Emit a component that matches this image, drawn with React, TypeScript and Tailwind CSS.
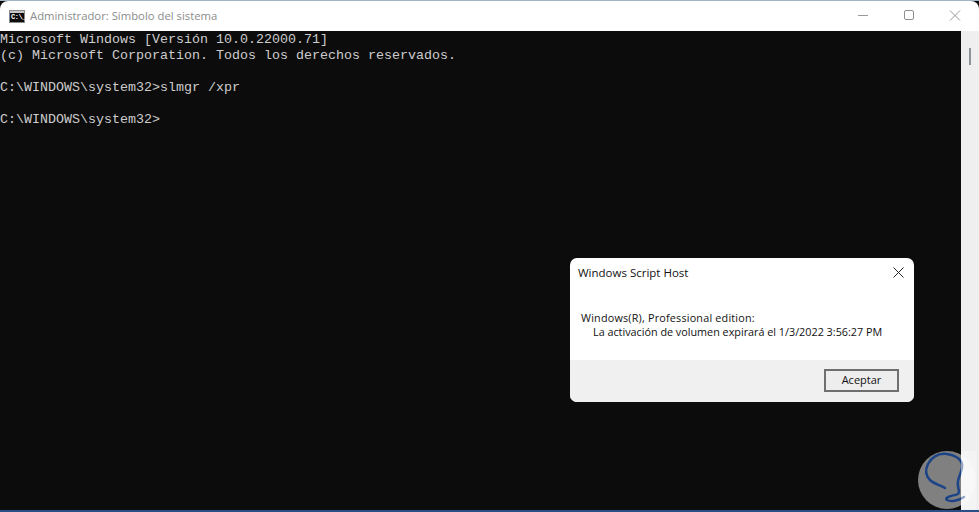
const consoleLines = [
  "Microsoft Windows [Versión 10.0.22000.71]",
  "(c) Microsoft Corporation. Todos los derechos reservados.",
  "",
  "C:\\WINDOWS\\system32>slmgr /xpr",
  "",
  "C:\\WINDOWS\\system32>",
];

const bulbPath =
  "M27 37C22 34 16 33 12 29C8 25 7 19 10 13C14 6 21 2 29 3C37 4 43 8 44 13C45 19 41 24 40 30C39 35 41 38 41 41C41 44 36 44 33 45C29 46 27 48 29 49C33 51 40 50 46 46";

function CmdIcon() {
  return (
    <div className="flex h-[13px] w-[16px] flex-col border border-[#8a8a8a] bg-[#0c0c0c]">
      <div className="h-[2px] bg-[#c8c8c8]" />
      <div className="flex-1 pl-[1px] font-['Liberation_Mono',monospace] text-[7px] leading-[8px] font-bold tracking-[-0.5px] text-white">
        C:\_
      </div>
    </div>
  );
}

function TitleBar() {
  return (
    <div className="flex h-[30px] items-center rounded-t-[8px] bg-white pl-[9px]">
      <CmdIcon />
      <span className="ml-[5px] text-[11.3px] text-[#8c8c8c]">Administrador: Símbolo del sistema</span>
      <div className="ml-auto flex items-center">
        <svg width="46" height="30" viewBox="0 0 46 30">
          <path d="M18 14.5h10" stroke="#999" strokeWidth="1" />
        </svg>
        <svg width="46" height="30" viewBox="0 0 46 30">
          <rect x="18.5" y="9.5" width="9" height="9" rx="1.5" fill="none" stroke="#8f8f8f" strokeWidth="1" />
        </svg>
        <svg width="46" height="30" viewBox="0 0 46 30" className="mr-[1px]">
          <path d="M18 9.5l10 10M28 9.5l-10 10" stroke="#999" strokeWidth="1" />
        </svg>
      </div>
    </div>
  );
}

function Scrollbar() {
  return (
    <div className="flex w-[18px] shrink-0 justify-center bg-[#efefef] pt-[17px]">
      <div className="h-[17px] w-[2px] bg-[#8f9295]" />
    </div>
  );
}

function ScriptDialog() {
  return (
    <div className="absolute top-[257px] left-[570px] flex h-[144px] w-[344px] flex-col overflow-hidden rounded-[7px] bg-white font-['Open_Sans','Noto_Sans',sans-serif] text-[#111]">
      <div className="flex h-[29px] items-center justify-between pr-[10px] pl-[8px] text-[11.5px]">
        <span>Windows Script Host</span>
        <svg width="11" height="11" viewBox="0 0 11 11">
          <path d="M.5.5l10 10M10.5.5l-10 10" stroke="#222" strokeWidth="1" />
        </svg>
      </div>
      <div className="h-[73px] pt-[24px] pl-[11px] text-[10.8px] leading-[14px]">
        <div className="tracking-[0.2px]">Windows(R), Professional edition:</div>
        <div className="pl-[12px]">La activación de volumen expirará el 1/3/2022 3:56:27 PM</div>
      </div>
      <div className="flex flex-1 items-center justify-end bg-[#f0f0f0] pr-[15px]">
        <button className="mt-[-2px] h-[23px] w-[75px] border-2 border-[#6f6f6f] bg-[#ededed] text-[11px] text-[#111]">
          Aceptar
        </button>
      </div>
    </div>
  );
}

function Watermark() {
  return (
    <div className="absolute top-[450px] left-[918px] h-[58px] w-[58px]">
      <div className="absolute inset-0 rounded-full bg-[linear-gradient(90deg,#808080_0%,#808080_74%,#f8f8f8_74%,#f8f8f8_100%)]" />
      <svg width="58" height="58" viewBox="0 0 58 58" className="absolute inset-0">
        <path d={bulbPath} fill="none" stroke="#1c4487" strokeWidth="2.5" strokeLinecap="round" />
        {/* lighter where the mark runs over the scrollbar */}
        <rect x="43" y="0" width="15" height="58" fill="#f8f8f8" fillOpacity="0.55" />
      </svg>
    </div>
  );
}

export default function App() {
  return (
    <div className="relative flex h-[512px] w-[979px] flex-col overflow-hidden border-t border-b-2 border-t-[#9fb4c4] border-b-[#2a4f86] bg-[#0c0c0c] font-['Open_Sans','Noto_Sans',sans-serif]">
      <TitleBar />
      <div className="flex min-h-0 flex-1">
        <pre className="flex-1 pt-[1px] font-['Liberation_Mono','DejaVu_Sans_Mono',monospace] text-[13.33px] leading-[16px] text-[#cccccc]">
          {consoleLines.join("\n")}
        </pre>
        <Scrollbar />
      </div>
      <ScriptDialog />
      <Watermark />
    </div>
  );
}
